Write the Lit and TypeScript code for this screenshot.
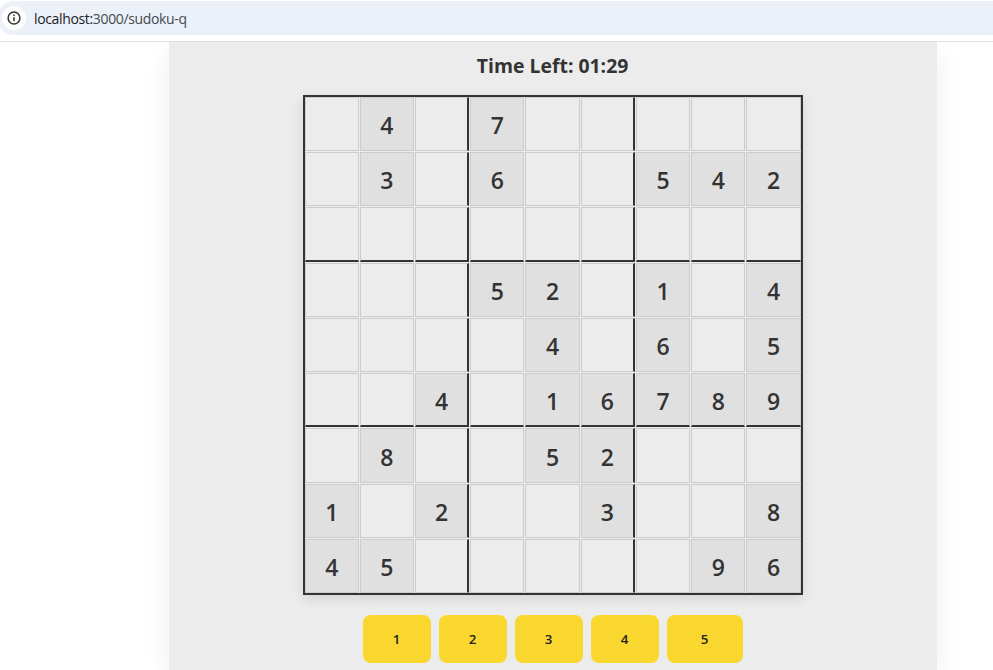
import { LitElement, html, css, svg } from "lit";
import { customElement } from "lit/decorators.js";
import { classMap } from "lit/directives/class-map.js";

const ROWS = [
  ".4.7.....",
  ".3.6..542",
  ".........",
  "...52.1.4",
  "....4.6.5",
  "..4.16789",
  ".8..52...",
  "1.2..3..8",
  "45.....96",
];

@customElement("sudoku-board")
class SudokuBoard extends LitElement {
  static styles = css`
    :host {
      display: grid;
      box-sizing: border-box;
      width: 500px;
      height: 500px;
      border: 2px solid #333;
      grid-template-columns: repeat(9, 1fr);
      grid-template-rows: repeat(9, 1fr);
      gap: 1px;
      box-shadow: 0 4px 12px rgba(0, 0, 0, 0.1);
    }
    .cell {
      box-sizing: border-box;
      min-width: 0;
      min-height: 0;
      border: 1px solid #ccc;
      padding-top: 2.3px;
      display: flex;
      align-items: center;
      justify-content: center;
      font-size: 23px;
      line-height: 30px;
      font-weight: 600;
      color: #333;
    }
    .given { background: #e0e0e0; }
    .right { border-right: 2px solid #333; }
    .bottom { border-bottom: 2px solid #333; }
  `;
  render() {
    return ROWS.map((row, r) =>
      [...row].map(
        (v, c) => html`<div class=${classMap({
          cell: true,
          given: v !== ".",
          right: c === 2 || c === 5,
          bottom: r === 2 || r === 5,
        })}>${v === "." ? "" : v}</div>`
      )
    );
  }
}

@customElement("app-root")
class AppRoot extends LitElement {
  static styles = css`
    :host {
      display: flex;
      flex-direction: column;
      height: 670px;
      overflow: hidden;
      background: #fff;
      font-family: "Segoe UI", "Open Sans", "Noto Sans", sans-serif;
    }
    .toolbar {
      box-sizing: border-box;
      flex: none;
      height: 42px;
      padding-top: 1px;
      border-bottom: 1px solid #dedfe1;
    }
    .address {
      box-sizing: border-box;
      height: 34px;
      margin-left: -3px;
      padding-left: 5px;
      border-radius: 17px 0 0 17px;
      background: #ebf0f9;
      display: flex;
      align-items: center;
      gap: 8px;
      font-size: 14px;
      line-height: 19px;
      letter-spacing: -0.35px;
      color: #474a4e;
    }
    .info {
      width: 24px;
      height: 24px;
      border-radius: 50%;
      background: #fff;
      display: flex;
      align-items: center;
      justify-content: center;
    }
    .host { color: #202124; }
    .viewport {
      flex: 1;
      min-height: 0;
      overflow: hidden;
    }
    .panel {
      box-sizing: border-box;
      width: 768px;
      height: 100%;
      margin-left: 168.6px;
      background: #ececec;
      box-shadow: 0 8px 24px rgba(0, 0, 0, 0.07);
      display: flex;
      flex-direction: column;
      align-items: center;
    }
    .timer {
      margin-top: 10px;
      height: 28px;
      line-height: 28px;
      font-size: 19.4px;
      font-weight: 700;
      color: #333;
    }
    sudoku-board { flex: none; margin-top: 15px; }
    .keys {
      flex: none;
      width: 380px;
      height: 48px;
      margin-top: 20px;
      display: grid;
      grid-template-columns: repeat(4, 68px) 76px;
      gap: 8px;
    }
    .key {
      border: 0;
      border-radius: 8px;
      background: #fad72f;
      color: #222;
      font: 600 13.3px "Segoe UI", "Open Sans", "Noto Sans", sans-serif;
      padding: 0;
    }
  `;
  render() {
    return html`
      <div class="toolbar">
        <div class="address">
          <div class="info">
            <svg width="14" height="14" viewBox="0 0 14 14" fill="none">
              ${svg`<circle cx="7" cy="7" r="5.9" stroke="#333" stroke-width="1.5"/>
              <path d="M7 6.2v4M7 3.6v1.5" stroke="#333" stroke-width="1.5"/>`}
            </svg>
          </div>
          <div><span class="host">localhost:</span>3000/sudoku-q</div>
        </div>
      </div>
      <div class="viewport">
        <div class="panel">
          <div class="timer">Time Left: 01:29</div>
          <sudoku-board></sudoku-board>
          <div class="keys">
            ${[1, 2, 3, 4, 5].map((n) => html`<button class="key">${n}</button>`)}
          </div>
        </div>
      </div>
    `;
  }
}
